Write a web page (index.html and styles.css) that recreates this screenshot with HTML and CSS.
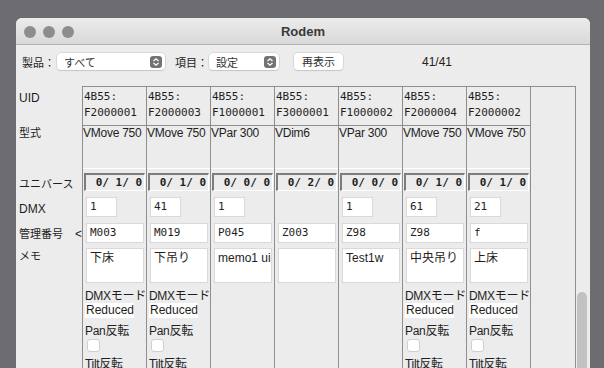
FILE: index.html
```html
<!DOCTYPE html>
<html lang="ja">
<head>
  <meta charset="UTF-8">
  <title>Rodem</title>
  <link rel="stylesheet" href="styles.css">
</head>
<body>
  <div class="window">
    <div class="titlebar">
      <div class="lights">
        <span class="light"></span>
        <span class="light"></span>
        <span class="light"></span>
      </div>
      <div class="title">Rodem</div>
    </div>

    <div class="toolbar">
      <span class="tool-label">製品：</span>
      <div class="select product">
        <span>すべて</span>
        <span class="arrows">
          <svg width="12" height="12" viewBox="0 0 12 12"><path d="M3.5 5 L6 2.8 L8.5 5 M3.5 7 L6 9.2 L8.5 7" fill="none" stroke="#fff" stroke-width="1.3"/></svg>
        </span>
      </div>
      <span class="tool-label item-label">項目：</span>
      <div class="select item">
        <span>設定</span>
        <span class="arrows">
          <svg width="12" height="12" viewBox="0 0 12 12"><path d="M3.5 5 L6 2.8 L8.5 5 M3.5 7 L6 9.2 L8.5 7" fill="none" stroke="#fff" stroke-width="1.3"/></svg>
        </span>
      </div>
      <div class="button">再表示</div>
      <span class="count">41/41</span>
    </div>

    <div class="sheet">
      <div class="labels">
        <div class="lbl r-uid">UID</div>
        <div class="lbl r-model">型式</div>
        <div class="lbl r-univ">ユニバース</div>
        <div class="lbl r-dmx">DMX</div>
        <div class="lbl r-mgmt">管理番号<span class="back">&lt;</span></div>
        <div class="lbl r-memo">メモ</div>
      </div>

      <div class="grid">
        <div class="col">
          <div class="uid">4B55:<br>F2000001</div>
          <div class="model">VMove 750</div>
          <div class="r-univ"><div class="univ">0/ 1/ 0</div></div>
          <div class="r-dmx"><div class="field short">1</div></div>
          <div class="r-mgmt"><div class="field">M003</div></div>
          <div class="r-memo"><div class="field memo">下床</div></div>
          <div class="opts">
            <div class="opt">DMXモード</div>
            <div class="mode">Reduced</div>
            <div class="opt pan">Pan反転</div>
            <div class="check"></div>
            <div class="opt tilt">Tilt反転</div>
          </div>
        </div>

        <div class="col">
          <div class="uid">4B55:<br>F2000003</div>
          <div class="model">VMove 750</div>
          <div class="r-univ"><div class="univ">0/ 1/ 0</div></div>
          <div class="r-dmx"><div class="field short">41</div></div>
          <div class="r-mgmt"><div class="field">M019</div></div>
          <div class="r-memo"><div class="field memo">下吊り</div></div>
          <div class="opts">
            <div class="opt">DMXモード</div>
            <div class="mode">Reduced</div>
            <div class="opt pan">Pan反転</div>
            <div class="check"></div>
            <div class="opt tilt">Tilt反転</div>
          </div>
        </div>

        <div class="col">
          <div class="uid">4B55:<br>F1000001</div>
          <div class="model">VPar 300</div>
          <div class="r-univ"><div class="univ">0/ 0/ 0</div></div>
          <div class="r-dmx"><div class="field short">1</div></div>
          <div class="r-mgmt"><div class="field">P045</div></div>
          <div class="r-memo"><div class="field memo">memo1 ui</div></div>
        </div>

        <div class="col">
          <div class="uid">4B55:<br>F3000001</div>
          <div class="model">VDim6</div>
          <div class="r-univ"><div class="univ">0/ 2/ 0</div></div>
          <div class="r-dmx"></div>
          <div class="r-mgmt"><div class="field">Z003</div></div>
          <div class="r-memo"><div class="field memo"></div></div>
        </div>

        <div class="col">
          <div class="uid">4B55:<br>F1000002</div>
          <div class="model">VPar 300</div>
          <div class="r-univ"><div class="univ">0/ 0/ 0</div></div>
          <div class="r-dmx"><div class="field short">1</div></div>
          <div class="r-mgmt"><div class="field">Z98</div></div>
          <div class="r-memo"><div class="field memo">Test1w</div></div>
        </div>

        <div class="col">
          <div class="uid">4B55:<br>F2000004</div>
          <div class="model">VMove 750</div>
          <div class="r-univ"><div class="univ">0/ 1/ 0</div></div>
          <div class="r-dmx"><div class="field short">61</div></div>
          <div class="r-mgmt"><div class="field">Z98</div></div>
          <div class="r-memo"><div class="field memo">中央吊り</div></div>
          <div class="opts">
            <div class="opt">DMXモード</div>
            <div class="mode">Reduced</div>
            <div class="opt pan">Pan反転</div>
            <div class="check"></div>
            <div class="opt tilt">Tilt反転</div>
          </div>
        </div>

        <div class="col">
          <div class="uid">4B55:<br>F2000002</div>
          <div class="model">VMove 750</div>
          <div class="r-univ"><div class="univ">0/ 1/ 0</div></div>
          <div class="r-dmx"><div class="field short">21</div></div>
          <div class="r-mgmt"><div class="field">f</div></div>
          <div class="r-memo"><div class="field memo">上床</div></div>
          <div class="opts">
            <div class="opt">DMXモード</div>
            <div class="mode">Reduced</div>
            <div class="opt pan">Pan反転</div>
            <div class="check"></div>
            <div class="opt tilt">Tilt反転</div>
          </div>
        </div>

        <div class="col spare"></div>
      </div>
    </div>

    <div class="scroller"></div>
  </div>
</body>
</html>
```

FILE: styles.css
```css
html, body {
  margin: 0;
  height: 100%;
  overflow: hidden;
}

body {
  background: #6c6c71;
  font-family: "Liberation Sans", "Noto Sans CJK JP", sans-serif;
  color: #1e1e1e;
}

.window {
  position: relative;
  margin: 18px 0 0 16px;
  width: 574px;
  height: 350px;
  background: #ececec;
  border-radius: 6px 6px 0 0;
  overflow: hidden;
}

/* title bar */
.titlebar {
  position: relative;
  height: 26px;
  background: linear-gradient(#ececec, #d8d8d8);
  border-bottom: 1px solid #b4b4b4;
}

.lights {
  display: flex;
  gap: 7px;
  padding: 8px 0 0 8px;
}

.light {
  width: 12px;
  height: 12px;
  border-radius: 50%;
  background: #8d8d8f;
}

.title {
  position: absolute;
  left: 0;
  right: 0;
  top: 0;
  line-height: 27px;
  text-align: center;
  font-size: 13px;
  font-weight: bold;
  color: #3a3a3a;
}

/* toolbar */
.toolbar {
  display: flex;
  align-items: center;
  height: 33px;
  padding-left: 6px;
  font-size: 11px;
}

.tool-label {
  font-family: "Noto Sans CJK JP", sans-serif;
  font-size: 11px;
  color: #222;
}

.select {
  display: flex;
  align-items: center;
  justify-content: space-between;
  height: 17px;
  margin-left: 2px;
  padding: 0 3px 0 7px;
  background: #fff;
  border-radius: 4px;
  box-shadow: 0 0 0 0.5px #c4c4c4, 0 1px 1px rgba(0, 0, 0, 0.15);
  font-family: "Noto Sans CJK JP", sans-serif;
  font-size: 11px;
  color: #333;
  box-sizing: border-box;
}

.product { width: 108px; }
.item { width: 70px; margin-left: 1px; }
.item-label { margin-left: 10px; }

.arrows {
  display: flex;
  width: 12px;
  height: 12px;
  background: #737373;
  border-radius: 3px;
}

.button {
  width: 49px;
  height: 17px;
  margin-left: 15px;
  line-height: 17px;
  text-align: center;
  background: #fff;
  border-radius: 4px;
  box-shadow: 0 0 0 0.5px #c4c4c4, 0 1px 1px rgba(0, 0, 0, 0.15);
  font-family: "Noto Sans CJK JP", sans-serif;
  font-size: 11px;
  color: #333;
}

.count {
  margin-left: 79px;
  font-size: 12px;
  color: #222;
}

/* sheet */
.sheet {
  display: flex;
  margin-top: 8px;
}

.labels {
  width: 66px;
  padding-top: 1px;
  font-size: 11px;
}

.lbl {
  box-sizing: border-box;
  padding-left: 3px;
  line-height: 14px;
}

.labels .r-uid { height: 39px; padding-top: 4px; font-size: 12px; }
.labels .r-model { height: 43px; padding-top: 0; }
.labels .r-univ { padding-top: 8px; }
.labels .r-dmx { padding-top: 8px; font-size: 12px; }
.labels .r-mgmt { padding-top: 7px; }
.labels .r-memo { padding-top: 4px; }

.back {
  margin-left: 12px;
  font-size: 12px;
}

.grid {
  display: flex;
  border-top: 1px solid #8e8e8e;
  border-right: 1px solid #8e8e8e;
  height: 320px;
}

.col {
  width: 64px;
  box-sizing: border-box;
  border-left: 1px solid #8e8e8e;
}

.col.spare { width: 45px; }

.uid {
  height: 39px;
  box-sizing: border-box;
  padding: 2px 0 0 1px;
  border-bottom: 1px solid #8e8e8e;
  font-family: "DejaVu Sans Mono", monospace;
  font-size: 11px;
  line-height: 16px;
}

.model {
  height: 43px;
  box-sizing: border-box;
  border-bottom: 1px solid #fff;
  font-size: 12px;
  letter-spacing: -0.25px;
  line-height: 14px;
  white-space: nowrap;
  overflow: hidden;
}

.r-univ, .r-dmx, .r-mgmt, .r-memo {
  display: flow-root;
}

.r-univ { height: 25px; }
.r-dmx { height: 26px; }
.r-mgmt { height: 25px; }
.r-memo { height: 39px; }

.univ {
  width: 61px;
  height: 18px;
  margin: 4px 0 0 1px;
  box-sizing: border-box;
  padding-right: 2px;
  border-style: solid;
  border-color: #7c7c7c #fff #fff #7c7c7c;
  border-width: 2px 1px 1px 2px;
  text-align: right;
  font-family: "DejaVu Sans Mono", monospace;
  font-size: 11px;
  font-weight: bold;
  line-height: 15px;
  white-space: pre;
}

.field {
  width: 58px;
  height: 20px;
  margin: 3px 0 0 3px;
  box-sizing: border-box;
  padding-left: 3px;
  background: #fff;
  border: 1px solid #d9d9d9;
  font-family: "DejaVu Sans Mono", monospace;
  font-size: 11px;
  line-height: 18px;
  overflow: hidden;
}

.field.short { width: 31px; }

.field.memo {
  height: 35px;
  padding: 2px 0 0 3px;
  font-family: "Liberation Sans", "Noto Sans CJK JP", sans-serif;
  font-size: 12px;
  line-height: 15px;
  white-space: nowrap;
}

.opts {
  padding: 5px 0 0 2px;
  font-size: 12px;
}

.opt {
  line-height: 14px;
  white-space: nowrap;
  letter-spacing: -0.3px;
}

.mode {
  width: 49px;
  height: 15px;
  background: #fff;
  line-height: 15px;
  padding-left: 1px;
  box-sizing: border-box;
  white-space: nowrap;
}

.opt.pan { margin-top: 6px; }

.check {
  width: 11px;
  height: 11px;
  margin: 1px 0 0 2px;
  background: #fff;
  border: 1px solid #cfcfcf;
  border-radius: 3px;
}

.opt.tilt { margin-top: 5px; }

.scroller {
  position: absolute;
  left: 561px;
  top: 274px;
  width: 10px;
  height: 120px;
  background: #c2c2c2;
  border-radius: 5px;
}
```
